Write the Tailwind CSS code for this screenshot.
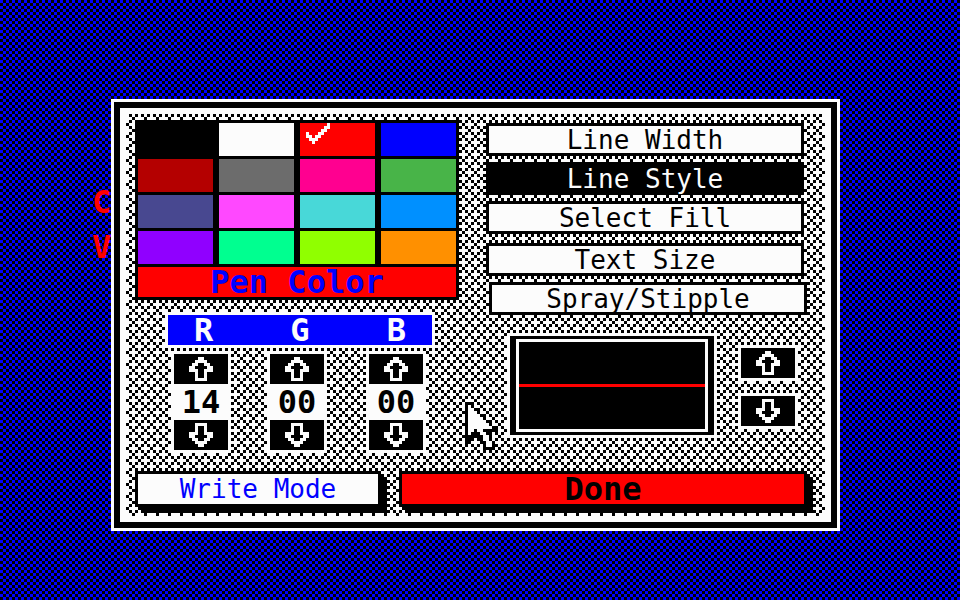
<!DOCTYPE html>
<html lang="en">
<head>
<meta charset="utf-8">
<meta name="viewport" content="width=device-width, initial-scale=1">
<title>Pen Settings</title>
<script src="https://cdn.jsdelivr.net/npm/@tailwindcss/browser@4"></script>
</head>
<body class="bg-black font-['DejaVu_Sans_Mono','Liberation_Mono',monospace] text-[26px] leading-none text-black">

<!-- Shared pixel-art symbols, one unit per pixel -->
<svg class="absolute h-0 w-0" aria-hidden="true" shape-rendering="crispEdges">
  <symbol id="up" viewBox="0 0 8 8">
    <path d="M3 0h2v1h1v1h1v1h1v2h-2v3h-4v-3h-2v-2h1v-1h1v-1h1z M3 2v1h-1v1h1v3h2v-3h1v-1h-1v-1z" fill="#fcfcfc" fill-rule="evenodd"/>
  </symbol>
  <symbol id="down" viewBox="0 0 8 8">
    <path d="M3 8h2v-1h1v-1h1v-1h1v-2h-2v-3h-4v3h-2v2h1v1h1v1h1z M3 6v-1h-1v-1h1v-3h2v3h1v1h-1v1z" fill="#fcfcfc" fill-rule="evenodd"/>
  </symbol>
</svg>

<main class="relative isolate min-h-screen pt-[99px] pr-[120px] pb-[69px] pl-[111px]">
  <!-- Desktop checkerboard -->
  <svg class="absolute inset-0 -z-10 h-full w-full" aria-hidden="true" shape-rendering="crispEdges">
    <defs>
      <pattern id="checker" width="6" height="6" patternUnits="userSpaceOnUse">
        <path d="M0 0h3v3h-3z M3 3h3v3h-3z" fill="#0000ff"/>
      </pattern>
    </defs>
    <rect width="100%" height="100%" fill="url(#checker)"/>
  </svg>

  <!-- Drawing text partly under the dialog -->
  <div class="absolute top-[186px] left-[92px] -z-10 flex flex-col gap-[13px] text-[32px] font-bold text-[#ff0000]">
    <span>C</span>
    <span>V</span>
  </div>

  <section class="border-3 border-[#fcfcfc]" aria-label="Pen settings">
    <div class="border-6 border-black bg-[#fcfcfc] p-[6px]">
      <div class="relative isolate pt-[6px] pr-[18px] pb-[9px] pl-[9px]">
        <svg class="absolute inset-0 -z-10 h-full w-full" aria-hidden="true" shape-rendering="crispEdges">
          <defs>
            <pattern id="stipple" x="-6" y="-6" width="12" height="12" patternUnits="userSpaceOnUse">
              <path d="M3 0h3v3h-3z M9 0h3v3h-3z M6 3h3v3h-3z M3 6h3v3h-3z M9 6h3v3h-3z M0 9h3v3h-3z"/>
            </pattern>
          </defs>
          <rect width="100%" height="100%" fill="url(#stipple)"/>
        </svg>

        <div class="flex gap-[27px] pr-[3px]">
          <div class="w-[324px] shrink-0">
            <!-- Palette -->
            <div class="bg-black p-[3px]">
              <div class="grid grid-cols-4 gap-x-[6px] gap-y-[3px]">
                <button class="h-[33px] bg-black" aria-label="Black"></button>
                <button class="h-[33px] bg-[#fcfcfc]" aria-label="White"></button>
                <button class="flex h-[33px] items-start bg-[#ff0000] pl-[6px]" aria-label="Red" aria-pressed="true">
                  <svg class="h-[21px] w-[24px]" viewBox="0 0 8 7" shape-rendering="crispEdges" aria-hidden="true">
                    <path d="M0 3h1v2h-1z M1 4h1v2h-1z M2 5h1v2h-1z M3 4h1v2h-1z M4 3h1v2h-1z M5 2h1v2h-1z M6 1h1v2h-1z M7 0h1v2h-1z" fill="#fcfcfc"/>
                  </svg>
                </button>
                <button class="h-[33px] bg-[#0000ff]" aria-label="Blue"></button>
                <button class="h-[33px] bg-[#b40000]" aria-label="Dark red"></button>
                <button class="h-[33px] bg-[#6c6c6c]" aria-label="Gray"></button>
                <button class="h-[33px] bg-[#ff0090]" aria-label="Pink"></button>
                <button class="h-[33px] bg-[#48b448]" aria-label="Green"></button>
                <button class="h-[33px] bg-[#484890]" aria-label="Slate"></button>
                <button class="h-[33px] bg-[#ff48ff]" aria-label="Magenta"></button>
                <button class="h-[33px] bg-[#48d8d8]" aria-label="Cyan"></button>
                <button class="h-[33px] bg-[#0090ff]" aria-label="Sky blue"></button>
                <button class="h-[33px] bg-[#9000ff]" aria-label="Violet"></button>
                <button class="h-[33px] bg-[#00ff90]" aria-label="Mint"></button>
                <button class="h-[33px] bg-[#90ff00]" aria-label="Lime"></button>
                <button class="h-[33px] bg-[#ff9000]" aria-label="Orange"></button>
              </div>
              <button class="mt-[3px] flex h-[30px] w-full items-center justify-center bg-[#ff0000] text-[32px] leading-none font-bold text-[#0000ff]">Pen Color</button>
            </div>

            <!-- RGB mixer -->
            <div class="mt-[12px] ml-[30px] w-[270px] border-3 border-[#fcfcfc]">
              <div class="flex h-[30px] items-center justify-between bg-[#0000ff] px-[26px] text-[32px] leading-none font-bold text-[#fcfcfc]">
                <span>R</span><span>G</span><span>B</span>
              </div>
            </div>
            <div class="mt-[3px] ml-[36px] grid grid-cols-[96px_99px_60px] text-[32px] leading-none font-bold">
              <div class="w-[60px] bg-[#fcfcfc] p-[3px]">
                <button class="flex h-[30px] w-full items-center justify-center bg-black" aria-label="More red"><svg class="h-6 w-6"><use href="#up"/></svg></button>
                <output class="flex h-[36px] items-center justify-center">14</output>
                <button class="flex h-[30px] w-full items-center justify-center bg-black" aria-label="Less red"><svg class="h-6 w-6"><use href="#down"/></svg></button>
              </div>
              <div class="w-[60px] bg-[#fcfcfc] p-[3px]">
                <button class="flex h-[30px] w-full items-center justify-center bg-black" aria-label="More green"><svg class="h-6 w-6"><use href="#up"/></svg></button>
                <output class="flex h-[36px] items-center justify-center">00</output>
                <button class="flex h-[30px] w-full items-center justify-center bg-black" aria-label="Less green"><svg class="h-6 w-6"><use href="#down"/></svg></button>
              </div>
              <div class="w-[60px] bg-[#fcfcfc] p-[3px]">
                <button class="flex h-[30px] w-full items-center justify-center bg-black" aria-label="More blue"><svg class="h-6 w-6"><use href="#up"/></svg></button>
                <output class="flex h-[36px] items-center justify-center">00</output>
                <button class="flex h-[30px] w-full items-center justify-center bg-black" aria-label="Less blue"><svg class="h-6 w-6"><use href="#down"/></svg></button>
              </div>
            </div>
          </div>

          <div class="flex min-w-0 flex-1 flex-col pt-[3px]">
            <div class="flex flex-col gap-[6px]">
              <button class="flex h-[33px] items-center justify-center border-3 border-black bg-[#fcfcfc]">Line Width</button>
              <button class="flex h-[33px] items-center justify-center border-3 border-black bg-black text-[#fcfcfc]" aria-pressed="true">Line Style</button>
              <button class="flex h-[33px] items-center justify-center border-3 border-black bg-[#fcfcfc]">Select Fill</button>
            </div>
            <div class="mt-[9px] flex flex-col gap-[6px]">
              <button class="flex h-[33px] items-center justify-center border-3 border-black bg-[#fcfcfc]">Text Size</button>
              <button class="-mr-[3px] ml-[3px] flex h-[33px] items-center justify-center border-3 border-black bg-[#fcfcfc]">Spray/Stipple</button>
            </div>

            <!-- Line style preview -->
            <div class="mt-[18px] flex items-start gap-[21px] pr-[6px] pl-[21px]">
              <div class="flex-1 bg-[#fcfcfc] p-[3px]">
                <div class="bg-black px-[6px] py-[3px]">
                  <div class="h-[93px] border-3 border-[#fcfcfc] pt-[42px]">
                    <div class="h-[3px] bg-[#ff0000]"></div>
                  </div>
                </div>
              </div>
              <div class="flex flex-col gap-3 pt-3">
                <button class="flex h-[36px] w-[60px] items-center justify-center border-3 border-[#fcfcfc] bg-black" aria-label="Previous style"><svg class="h-6 w-6"><use href="#up"/></svg></button>
                <button class="flex h-[36px] w-[60px] items-center justify-center border-3 border-[#fcfcfc] bg-black" aria-label="Next style"><svg class="h-6 w-6"><use href="#down"/></svg></button>
              </div>
            </div>
          </div>
        </div>

        <div class="mt-[18px] flex gap-[18px]">
          <button class="flex h-[36px] w-[246px] shrink-0 items-center justify-center border-3 border-black bg-[#fcfcfc] text-[#0000ff] shadow-[3px_3px_0_#000,6px_6px_0_#000]">Write Mode</button>
          <button class="flex h-[36px] flex-1 items-center justify-center border-3 border-black bg-[#ff0000] text-[32px] leading-none font-bold shadow-[3px_3px_0_#000,6px_6px_0_#000]">Done</button>
        </div>
      </div>
    </div>
  </section>

  <!-- Mouse pointer -->
  <svg class="pointer-events-none absolute top-[402px] left-[465px] h-[48px] w-[33px]" viewBox="0 0 11 16" shape-rendering="crispEdges" aria-hidden="true">
    <path d="M0 0h3v2h2v2h2v2h2v2h2v2h-3v1h1v2h1v3h-4v-2h-1v-2h-2v1h-1v1h-1v1h-1z" fill="#000"/>
    <path d="M1 1h1v1h1v1h1v1h1v1h1v1h1v1h1v1h1v1h-3v1h1v1h1v2h1v2h-2v-2h-1v-2h-1v-1h-1v-1h-1v1h-1v1h-1z" fill="#fcfcfc"/>
  </svg>
</main>
</body>
</html>
